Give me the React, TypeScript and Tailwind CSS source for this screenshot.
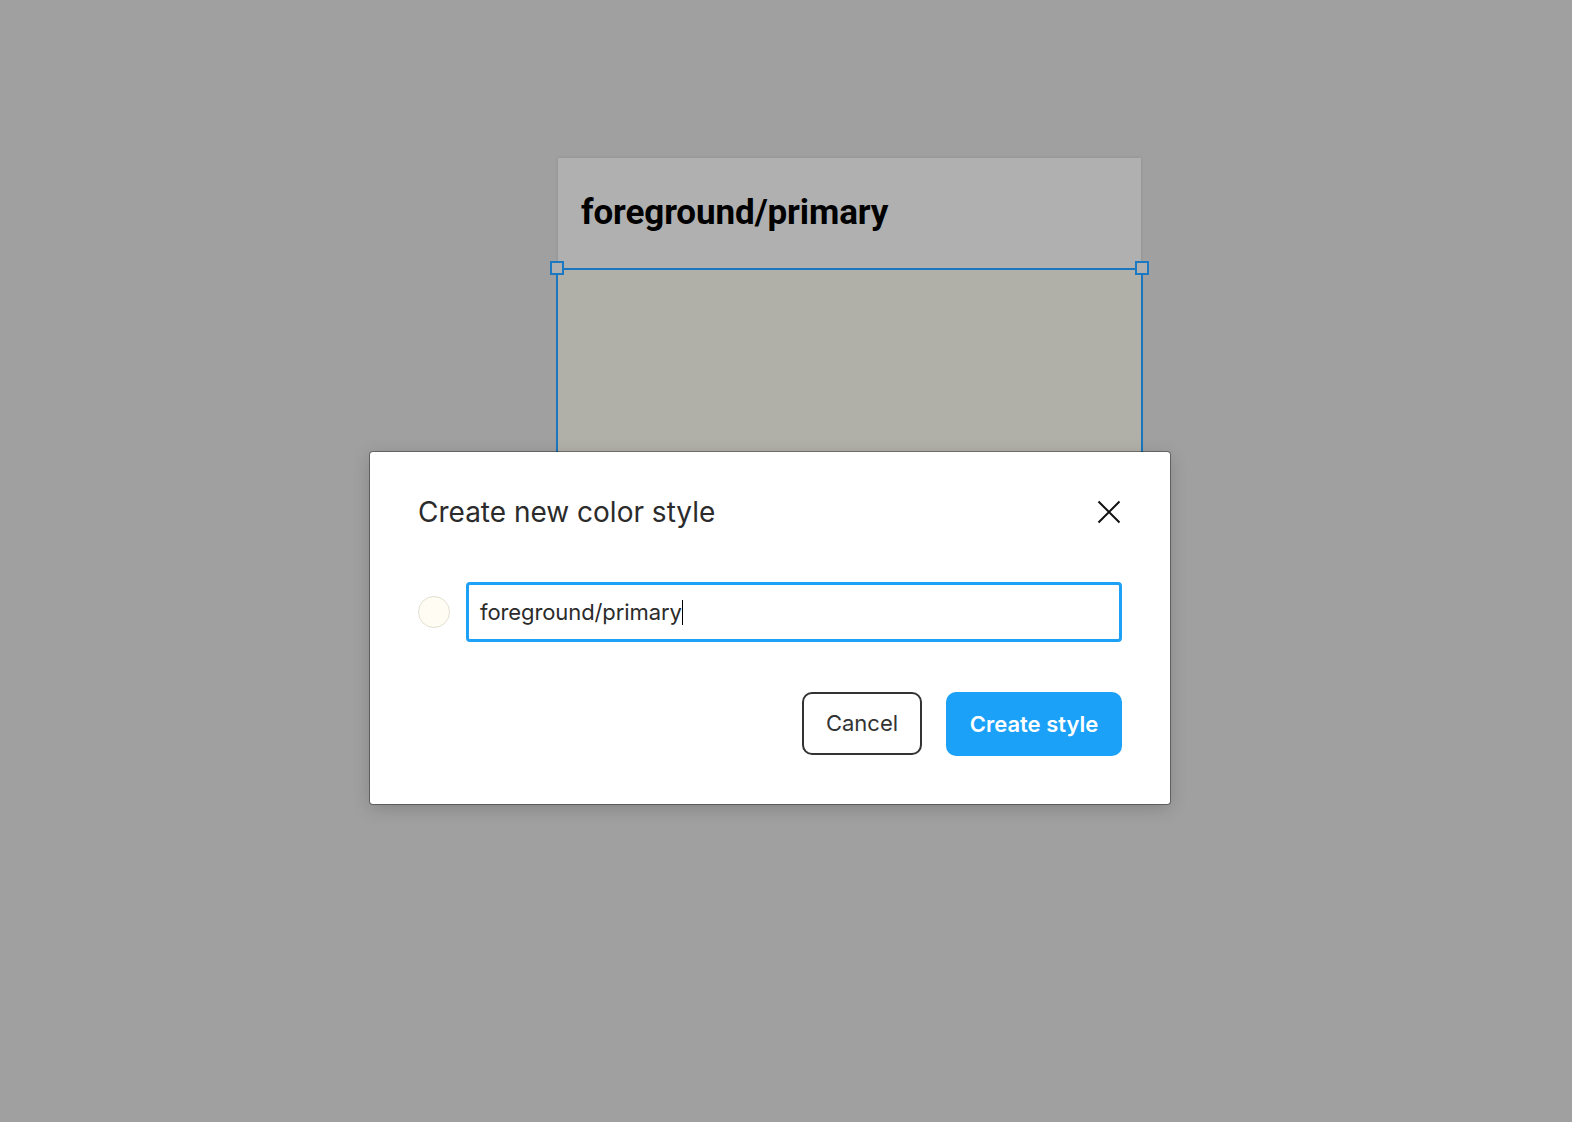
import React from "react";

const inter = { fontFamily: "Inter, 'Noto Sans', sans-serif" };

function Handle({ side }: { side: "left" | "right" }) {
  return (
    <div
      className={
        "absolute top-[-8px] w-[14px] h-[14px] border-2 border-[#1b79c2] bg-[#b0b0b0] " +
        (side === "left" ? "left-[-8px]" : "right-[-8px]")
      }
    />
  );
}

function CloseIcon() {
  return (
    <svg width="24" height="24" viewBox="0 0 24 24" fill="none">
      <path d="M1.5 1.5L22.5 22.5M22.5 1.5L1.5 22.5" stroke="#111" strokeWidth="2" />
    </svg>
  );
}

export default function App() {
  return (
    <div className="relative w-full h-[1122px] overflow-hidden bg-[#a0a0a0]">
      {/* canvas frame */}
      <div className="pt-[158px] pl-[558px]">
        <div className="w-[583px] bg-[#b0b0b0] shadow-[0_0_3px_rgba(0,0,0,0.12)]">
          <div className="h-[111px] pl-[23px] flex items-center">
            <h1
              className="text-[35px] font-bold text-black tracking-[-0.1px]"
              style={{ fontFamily: "Roboto, 'Liberation Sans', sans-serif" }}
            >
              foreground/primary
            </h1>
          </div>
          <div className="relative h-[300px] bg-[#b1b0a8]">
            <div className="absolute top-[-1px] left-[-2px] right-[-2px] bottom-0 border-2 border-[#1a77bf]" />
            <Handle side="left" />
            <Handle side="right" />
          </div>
        </div>
      </div>

      {/* dialog */}
      <div
        className="absolute left-[370px] top-[452px] w-[800px] bg-white rounded-[3px] shadow-[0_0_0_1px_rgba(0,0,0,0.35),0_4px_18px_rgba(0,0,0,0.18)] pt-[36px] px-12 pb-12"
        style={inter}
      >
        <div className="h-12 flex items-center justify-between">
          <h2 className="text-[28px] text-[#2b2b2b]">Create new color style</h2>
          <button className="w-6 h-6 mr-[1px] flex items-center justify-center">
            <CloseIcon />
          </button>
        </div>

        <div className="mt-[46px] flex items-center gap-4">
          <div className="w-8 h-8 shrink-0 rounded-full bg-[#fffdf3] border border-[#e3e0d2]" />
          <div className="flex-1 h-[60px] border-[3px] border-[#1da1f7] rounded-[4px] flex items-center pl-[11px]">
            <span className="text-[22px] text-[#2b2b2b] tracking-[-0.1px]">foreground/primary</span>
            <span className="w-[1.5px] h-[25px] bg-black" />
          </div>
        </div>

        <div className="mt-[50px] flex justify-end gap-6">
          <button className="w-[120px] h-[63px] rounded-[10px] border-2 border-[#333] text-[22px] text-[#333]">
            Cancel
          </button>
          <button className="w-[176px] h-[64px] rounded-[10px] bg-[#1ba1f7] text-[22px] font-semibold text-white">
            Create style
          </button>
        </div>
      </div>
    </div>
  );
}
